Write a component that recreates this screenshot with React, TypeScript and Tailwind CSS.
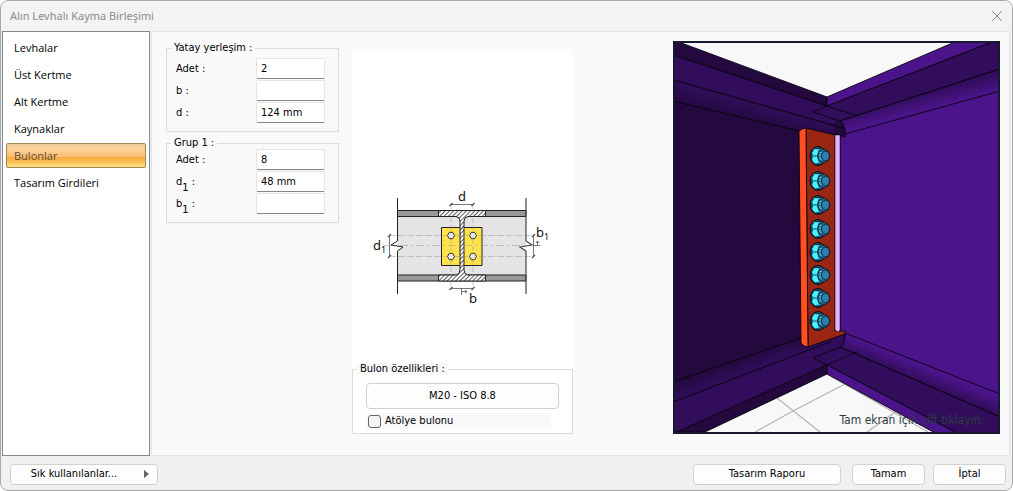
import React from 'react';
import { X } from 'lucide-react';

const TABS = ['Levhalar', 'Üst Kertme', 'Alt Kertme', 'Kaynaklar', 'Bulonlar', 'Tasarım Girdileri'];

const BOLTS = [115, 140, 164, 188, 211, 234, 257, 280];

export default function App() {
  return (
    <div className="flex min-h-screen flex-col overflow-hidden rounded-lg border border-[#a8a8a8] bg-[#f0f0f0] font-['DejaVu_Sans_Condensed','Open_Sans',sans-serif] text-[11px] leading-4 text-black">
      <header className="flex h-[30px] items-center justify-between bg-[#f3f3f3] pr-1.5 pl-[9px]">
        <h1 className="font-['Noto_Sans',sans-serif] text-[#8b8b8b]">Alın Levhalı Kayma Birleşimi</h1>
        <button type="button" aria-label="Kapat" className="text-[#777]">
          <X className="size-[18px]" strokeWidth={1.2} />
        </button>
      </header>

      <div className="flex grow">
        <nav className="ml-px w-[148px] shrink-0 border border-[#828790] bg-white px-[3px] pt-[3px]">
          {TABS.map((tab) => (
            <TabButton key={tab} label={tab} active={tab === 'Bulonlar'} />
          ))}
        </nav>

        <main className="mr-0.5 ml-px flex grow border border-[#e5e5e5] bg-[#f9f9f9] pt-[9px] pr-[9px] pb-[21px] pl-3.5">
          <div className="w-[173px] shrink-0 space-y-[5px] pt-px">
            <Group title="Yatay yerleşim :">
              <div className="pt-1 pb-[7px]">
                <Field id="adet" label="Adet :" value="2" />
                <Field id="b" label="b :" value="" />
                <Field id="d" label="d :" value="124 mm" />
              </div>
            </Group>
            <Group title="Grup 1 :">
              <div className="pb-[7px]">
                <Field id="adet1" label="Adet :" value="8" />
                <Field id="d1" label={<>d<Sub /> :</>} value="48 mm" />
                <Field id="b1" label={<>b<Sub /> :</>} value="" />
              </div>
            </Group>
          </div>

          <div className="mt-2 ml-[13px] flex w-[221px] shrink-0 flex-col bg-white">
            <div className="flex grow items-center justify-center pt-[84px] pr-0.5">
              <SectionDiagram />
            </div>
            <Group title="Bulon özellikleri :">
              <div className="px-[13px] pt-2 pb-1">
                <PushButton className="h-[26px] w-full">M20 - ISO 8.8</PushButton>
                <label className="mt-1 mr-2 flex h-4 items-center gap-1 bg-[#f9f9f9] pl-0.5">
                  <input type="checkbox" className="size-[13px] appearance-none rounded-[3px] border border-[#666] bg-[#f5f5f5]" />
                  Atölye bulonu
                </label>
              </div>
            </Group>
          </div>

          <div className="relative ml-auto w-[327px] shrink-0 self-start">
            <ModelView />
            <p className="absolute right-4 bottom-1.5 text-[12px] text-[#2c3d40]">Tam ekran için çift tıklayın.</p>
          </div>
        </main>
      </div>

      <footer className="flex h-[34px] items-center pt-0.5 pr-1.5 pl-[9px]">
        <PushButton className="relative h-[21px] w-[148px] pr-5">
          Sık kullanılanlar...
          <span className="absolute right-2 border-y-4 border-l-[5px] border-y-transparent border-l-[#666]" />
        </PushButton>
        <div className="ml-auto flex">
          <PushButton className="h-[21px] w-[148px]">Tasarım Raporu</PushButton>
          <PushButton className="ml-[11px] h-[21px] w-[73px]">Tamam</PushButton>
          <PushButton className="ml-2 h-[21px] w-[73px]">İptal</PushButton>
        </div>
      </footer>
    </div>
  );
}

/* --- Controls --- */

function TabButton({ label, active }: { label: string; active: boolean }) {
  return (
    <button
      type="button"
      className={`mb-0.5 block h-[25px] w-full rounded-[2px] border pl-[7px] text-left font-['Open_Sans',sans-serif] ${
        active
          ? 'border-[#a38752] bg-[linear-gradient(#eac79a_0%,#fcd3a0_15%,#fcbf74_55%,#f8a83f_56%,#fbc257_80%,#fee08c_100%)] text-[#5a4a3c]'
          : 'border-transparent'
      }`}
    >
      {label}
    </button>
  );
}

function Sub() {
  return <span className="relative top-1.5">1</span>;
}

function Group({ title, children }: { title: string; children: React.ReactNode }) {
  return (
    <fieldset className="min-w-0 border border-[#dcdcdc]">
      <legend className="ml-1 bg-[#f9f9f9] px-[3px] leading-3">{title}</legend>
      {children}
    </fieldset>
  );
}

function Field({ id, label, value }: { id: string; label: React.ReactNode; value: string }) {
  return (
    <div className="mb-px flex items-center pl-[9px]">
      <label htmlFor={id} className="w-20">{label}</label>
      <input
        id={id}
        defaultValue={value}
        className="h-[21px] w-[69px] rounded-[2px] border border-[#e5e5e5] border-b-[#868686] bg-white px-1"
      />
    </div>
  );
}

function PushButton({ className, children }: { className: string; children: React.ReactNode }) {
  return (
    <button
      type="button"
      className={`flex items-center justify-center rounded border border-[#d0d0d0] bg-[#fdfdfd] ${className}`}
    >
      {children}
    </button>
  );
}

/* --- Drawings --- */

function SectionDiagram() {
  return (
    <svg width="180" height="124" viewBox="0 -4 180 124" fill="none" className="font-['Noto_Sans',sans-serif]">
      <defs>
        <pattern id="hatch" width="3" height="3" patternUnits="userSpaceOnUse" patternTransform="rotate(45)">
          <rect width="3" height="3" fill="#fff" />
          <path d="M.5 0V3" stroke="#333" strokeWidth=".8" />
        </pattern>
      </defs>

      <path d="M25.500 21H154V91H25.500Z" fill="#e4e4e4" />
      <path d="M25.500 20.500H154V26.500H25.500ZM25.500 85H154V91H25.500Z" fill="#999" stroke="#222" />
      <path d="M69.500 37.500H110V75.500H69.500Z" fill="#ffe34d" stroke="#222" />
      <path
        d="M66.500 20.500H113.500V26.500H96Q92 27 92 31V80Q92 84.500 96 85H113.500V91H66.500V85H84Q88 84.500 88 80V31Q88 27 84 26.500H66.500Z"
        fill="url(#hatch)"
        stroke="#222"
      />

      <g stroke="#999" strokeWidth=".5">
        <path d="M17 45.500H162M17 66.500H162" strokeDasharray="7 2" />
        <path d="M12 55.500H160" strokeDasharray="8 3 2 3" />
        <path d="M79 14V98M101 14V98" strokeDasharray="5 2" />
      </g>

      {[79, 101].map((x) => [45.5, 66.5].map((y) => (
        <path key={`${x}-${y}`} d={`M${x - 3.5} ${y}l1.8-3.2h3.4l1.8 3.2l-1.8 3.2h-3.4z`} fill="#e6e6e6" stroke="#333" />
      )))}

      <path d="M25.500 8V51L19 55L31 57L25.500 61V104" stroke="#222" fill="#fff" />
      <path d="M154 8V51L160 55L148 57L154 61V104" stroke="#444" fill="#fff" strokeWidth="1.2" />

      <g stroke="#555" strokeWidth=".8">
        <path d="M79 14.500H101M79 98.500H101M17.500 45V66M161.500 45V66" />
        <path d="M77.500 16l3-3M99.500 16l3-3M77.500 100l3-3M99.500 100l3-3M16 47l3-3M16 68l3-3M160 47l3-3M160 68l3-3" strokeWidth="1.4" />
        <path d="M89.500 98V105M90 101.500H95M93 100l2 1.500l-2 1.500M165.500 56V51M164 53l1.500-2l1.500 2M161 55.500H168" />
      </g>

      <g fill="#111" fontSize="13">
        <text x="90" y="11" textAnchor="middle">d</text>
        <text x="101" y="113" textAnchor="middle">b</text>
        <text x="1" y="60">d<tspan fontSize="9" dy="3">1</tspan></text>
        <text x="164" y="47">b<tspan fontSize="9" dy="3">1</tspan></text>
      </g>
    </svg>
  );
}

function ModelView() {
  return (
    <svg viewBox="0 0 327 393" className="block w-full" stroke="#07020d" strokeWidth=".9">
      <defs>
        <linearGradient id="leftTop" x1="80" y1="61" x2="75" y2="80" gradientUnits="userSpaceOnUse">
          <stop stopColor="#320d5c" />
          <stop offset="1" stopColor="#24093f" />
        </linearGradient>
        <linearGradient id="rightTop" x1="245" y1="54" x2="250" y2="73" gradientUnits="userSpaceOnUse">
          <stop stopColor="#320d5c" />
          <stop offset=".8" stopColor="#4b148a" />
        </linearGradient>
        <linearGradient id="leftBottom" x1="65" y1="318" x2="71" y2="334" gradientUnits="userSpaceOnUse">
          <stop stopColor="#24093f" />
          <stop offset="1" stopColor="#320d5c" />
        </linearGradient>
        <linearGradient id="rightBottom" x1="250" y1="322" x2="243" y2="339" gradientUnits="userSpaceOnUse">
          <stop offset=".2" stopColor="#4b148a" />
          <stop offset="1" stopColor="#320d5c" />
        </linearGradient>
      </defs>

      <path d="M0 0H327V393H0Z" fill="#f8f8f8" stroke="none" />
      <path d="M104 357L147 391M154 333L255 391M82 391L120 370L172 343M194 391L224 370" stroke="#b5b5b5" strokeWidth="1.2" fill="none" />

      {/* left girder */}
      <path d="M0 60L127 90L172 96V292L128 297L0 341Z" fill="#24093f" />
      <path d="M0 0H3L154 56V65L0 14Z" fill="#24093f" />
      <path d="M0 14L154 65L185 75L167 80L170 87L0 39Z" fill="#320d5c" />
      <path d="M0 39L170 87L172 96L127 90L0 60Z" fill="url(#leftTop)" />
      <path d="M0 341L128 297L172 292L170 297L0 361Z" fill="url(#leftBottom)" />
      <path d="M0 361L170 296L167 306L184 311L154 324L4 391H0Z" fill="#320d5c" />
      <path d="M4 391L154 324V333L32 391Z" fill="#24093f" />

      {/* right beam */}
      <path d="M167 80L327 28V376L167 306Z" fill="#4b148a" />
      <path d="M154 56L284 0H322L154 65Z" fill="#4b148a" />
      <path d="M154 65L322 0H327V28L167 80L140 71Z" fill="#320d5c" />
      <path d="M167 80L327 28V50L172 93Q172 83 167 80Z" fill="url(#rightTop)" />
      <path d="M154 65L185 75" />
      <path d="M172 292L327 353V376L167 306Q172 301 172 292Z" fill="url(#rightBottom)" />
      <path d="M167 306L327 376V393H285L154 324L140 317Z" fill="#320d5c" />
      <path d="M154 324L284 392H262L154 333Z" fill="#4b148a" />
      <path d="M154 324L184 311" />
      <path d="M162 80L167 80Q173 85 172 96L161 93Z" fill="#24093f" stroke="none" />
      <path d="M167 80Q173 85 172 96L161 93M155 83L170 87" fill="none" />
      <path d="M162 294L172 292Q172 301 167 306L158 302Z" fill="#320d5c" stroke="none" />
      <path d="M172 292Q172 301 167 306" fill="none" />

      {/* end plate */}
      <path d="M133 87L162 94V290H172V293L135 306Z" fill="#9a2713" />
      <path d="M126 90L129 88L133 87L135 306L131 305L128 302Z" fill="#ff4e1f" />
      <path d="M162 94H167V289L165 291L162 289Z" fill="#dfb5f5" strokeWidth=".5" />

      {BOLTS.map((y) => (
        <g key={y} transform={`translate(147 ${y})`}>
          <ellipse cx="-2" rx="8" ry="9.500" fill="#175d73" />
          <path d="M-8 -4L-5 -7L2 -8L5 -5V6L1 8L-5 8L-8 4Z" fill="#287fae" strokeWidth=".6" />
          <path d="M-8 -3L-5.500 -7L-1 -6.500L-3.500 0L-1 6.500L-5 7.500L-8 4L-6.500 0Z" fill="#48f3ff" stroke="none" />
          <path d="M-6.500 0H-3.500" strokeWidth=".7" />
          <path d="M-1 -5L4 -7L8 -5L10 0L8 5L4 7L-1 5L-2.500 0Z" fill="#226f92" strokeWidth=".7" />
          <path d="M1.500 -3.500H0V3.500H1.500" fill="none" stroke="#48f3ff" strokeDasharray="2 1" />
          <ellipse cx="5.500" rx="4" ry="4.800" fill="#2c80ad" strokeWidth=".6" />
        </g>
      ))}

      <path d="M1 1H326V392H1Z" fill="none" stroke="#161a30" strokeWidth="2" />
    </svg>
  );
}
